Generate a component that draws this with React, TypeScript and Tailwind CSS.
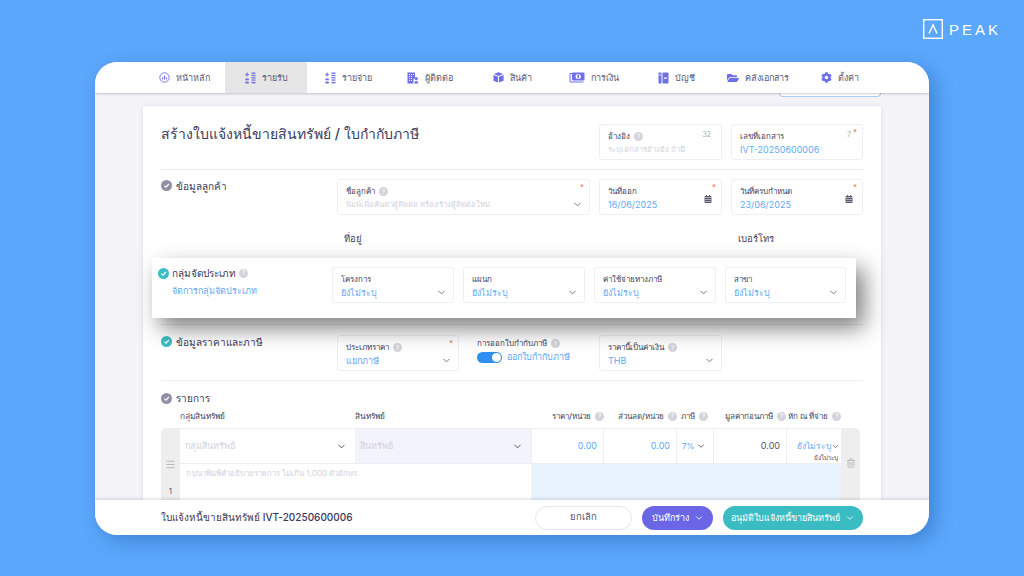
import React from "react";
import { ChevronDown, Menu, Trash2 } from "lucide-react";
import { FaFolderOpen, FaCog, FaCalendarAlt } from "react-icons/fa";

const C = "text-[#6f6fe8]";
const Bars = () => (
  <svg width="11" height="12" viewBox="0 0 11 12" className={C} fill="currentColor">
    <rect x="0.3" y="2" width="3.6" height="1.1" />
    <rect x="1.55" y="0.5" width="1.1" height="4" />
    <rect x="0.3" y="6.4" width="3.6" height="1.8" rx=".6" />
    <rect x="0.3" y="9.6" width="3.6" height="1.8" rx=".6" />
    <rect x="6.5" y="0.5" width="4" height="1.3" />
    <rect x="6.5" y="2.8" width="4" height="1.3" />
    <rect x="6.5" y="5.1" width="4" height="1.3" />
    <rect x="6.5" y="7.4" width="4" height="1.3" />
    <rect x="6.5" y="9.9" width="4" height="1.5" />
  </svg>
);
const HomeIcon = () => (
  <svg width="11" height="11" viewBox="0 0 11 11" className={C} fill="none" stroke="currentColor">
    <circle cx="5.5" cy="5.5" r="4.7" strokeWidth=".9" />
    <path d="M3.7 7.5V5.2M5.5 7.5V3.5M7.3 7.5V5.2" strokeWidth="1" />
  </svg>
);
const Contact = () => (
  <svg width="12" height="12" viewBox="0 0 12 12" className={C} fill="currentColor">
    <path d="M0.5 0.5h7.5v5.2a3 3 0 0 0-1.6 2.7v3.1H0.5z" />
    <path d="M2 2h1v1H2zM4 2h1v1H4zM6 2h1v1H6zM2 4h1v1H2zM4 4h1v1H4zM2 6h1v1H2zM4 6h1v1H4zM2 8h1v1H2zM4 8h1v1H4z" fill="white" />
    <circle cx="9.2" cy="6.6" r="1.6" />
    <path d="M7.2 11.5c0-1.6.9-2.5 2-2.5s2 .9 2 2.5z" />
  </svg>
);
const Cube = () => (
  <svg width="11" height="11" viewBox="0 0 11 11" className={C} fill="currentColor">
    <path d="M5.5 0.3 10.2 2.1 5.5 3.9 0.8 2.1z" />
    <path d="M0.4 3 5 4.8v5.8L.4 8.7zM10.6 3 6 4.8v5.8l4.6-1.9z" />
  </svg>
);
const Money = () => (
  <svg width="16" height="12" viewBox="0 0 16 12" className={C} fill="none" stroke="currentColor">
    <path d="M3 1.5h-2v8.5h13.5" strokeWidth="1" />
    <rect x="3" y="0.5" width="12.5" height="8" rx="1" fill="currentColor" stroke="none" />
    <circle cx="9.2" cy="4.5" r="2.6" fill="white" stroke="none" />
    <rect x="8.4" y="2.6" width="1.6" height="3.8" fill="currentColor" stroke="none" />
  </svg>
);
const Book = () => (
  <svg width="11" height="12" viewBox="0 0 11 12" className={C} fill="currentColor">
    <rect x="0.5" y="0.5" width="3" height="11" rx=".6" />
    <rect x="4.5" y="0.5" width="6" height="11" rx=".8" />
    <rect x="6" y="5.5" width="3" height="1.2" fill="white" />
    <rect x="1.2" y="2.5" width="1.6" height="1" fill="white" />
  </svg>
);
const nav: [string, React.ReactNode][] = [
  ["หน้าหลัก", <HomeIcon />],
  ["รายรับ", <Bars />],
  ["รายจ่าย", <Bars />],
  ["ผู้ติดต่อ", <Contact />],
  ["สินค้า", <Cube />],
  ["การเงิน", <Money />],
  ["บัญชี", <Book />],
  ["คลังเอกสาร", <FaFolderOpen size={12} className={C} />],
  ["ตั้งค่า", <FaCog size={11} className={C} />],
];

const Q = () => (
  <span className="inline-flex h-[9px] w-[9px] shrink-0 items-center justify-center rounded-full bg-[#d3d3dc] text-[6px] leading-none text-white">?</span>
);
const Check = ({ teal }: { teal?: boolean }) => (
  <span className={`inline-flex h-[11px] w-[11px] shrink-0 items-center justify-center rounded-full ${teal ? "bg-[#3cbcc4]" : "bg-[#9191a6]"}`}>
    <svg width="7" height="7" viewBox="0 0 7 7" fill="none" stroke="white" strokeWidth="1.2"><path d="M1.3 3.6 3 5.1 5.8 2" /></svg>
  </span>
);
const Req = () => <span className="absolute right-[5px] top-[1px] text-[8px] leading-[12px] text-[#f26d5b]">*</span>;

function Field({ w, label, value, q, req, placeholder, chevron, cal, count }: {
  w: string; label: string; value: string; q?: boolean; req?: boolean; placeholder?: boolean; chevron?: boolean; cal?: boolean; count?: string;
}) {
  return (
    <div className={`relative h-[36px] shrink-0 rounded-[3px] border border-[#eeeef5] bg-white pl-[8px] pr-[6px] pt-[5px] ${w}`}>
      <div className="flex h-[13px] items-center gap-[4px] whitespace-nowrap text-[8px] leading-[13px] text-[#3f3f5c]">{label}{q && <Q />}</div>
      <div className={`truncate leading-[13px] ${placeholder ? "text-[7.7px] text-[#d2d2dc]" : "text-[9px] text-[#62a9f8]"}`}>{value}</div>
      {req && <Req />}
      {count && <span className={`absolute top-[5px] text-[7px] leading-[10px] text-[#a9a9b8] ${req ? "right-[11px]" : "right-[10px]"}`}>{count}</span>}
      {chevron && <ChevronDown size={11} strokeWidth={1.8} className="absolute right-[6px] top-[19px] text-[#5a5a72]" />}
      {cal && <FaCalendarAlt size={8} className="absolute right-[9px] top-[15px] text-[#5a5a72]" />}
    </div>
  );
}

const Th = ({ w, label, q, right }: { w: string; label: string; q?: boolean; right?: boolean }) => (
  <div className={`flex shrink-0 items-center gap-[4px] whitespace-nowrap font-medium leading-[12px] text-[#3f3f5c] ${w} ${right ? "justify-end text-[8px]" : "text-[8.3px]"}`}>{label}{q && <Q />}</div>
);

export default function App() {
  return (
    <div className="relative h-[576px] w-[1024px] overflow-hidden bg-[#5aa7fb] pl-[95px] pt-[62px] font-['Inter','Noto_Sans',sans-serif]">
      <div className="absolute left-[923px] top-[19px] flex items-center gap-[6px] text-white">
        <svg width="20" height="20" viewBox="0 0 20 20" fill="none" stroke="white"><rect x=".7" y=".7" width="18.6" height="18.6" strokeWidth="1.4" /><path d="M6 14.5 10 6 14 14.5" strokeWidth="1.5" /></svg>
        <span className="text-[15px] font-medium leading-none tracking-[3px] font-['Liberation_Sans',sans-serif]">PEAK</span>
      </div>

      <div className="relative flex h-[473px] w-[834px] flex-col overflow-hidden rounded-[22px] bg-[#f3f3f8] shadow-[6px_6px_18px_rgba(20,70,140,0.35)]">
        <nav className="relative z-10 flex h-[31px] shrink-0 bg-white pl-[48px] shadow-[0_1px_2px_rgba(0,0,0,0.2)]">
          {nav.map(([t, ic], i) => (
            <div key={t} className={`flex w-[82px] items-center justify-center gap-[6px] text-[9px] text-[#5a5a78] ${i === 1 ? "bg-[#e6e6e6]" : ""}`}>
              {ic}<span>{t}</span>
            </div>
          ))}
        </nav>

        <main className="relative min-h-0 flex-1 overflow-hidden pl-[48px] pt-[13px]">
          <div className="absolute left-[684px] top-0 h-[4px] w-[102px] rounded-b-[6px] border border-t-0 border-[#a8cdf8] bg-white" />
          <div className="w-[738px] bg-white px-[18px] pt-[18px] pb-[40px] shadow-[0_0_4px_rgba(40,40,80,0.12)]">
            <div className="flex h-[36px] gap-[9px]">
              <h1 className="w-[429px] shrink-0 pt-[1px] text-[14px] font-medium leading-[18px] text-[#3a3a5e]">สร้างใบแจ้งหนี้ขายสินทรัพย์ / ใบกำกับภาษี</h1>
              <Field w="w-[123px]" label="อ้างอิง" value="ระบุเอกสารอ้างอิง ถ้ามี" q placeholder count="32" />
              <Field w="w-[132px]" label="เลขที่เอกสาร" value="IVT-20250600006" req count="7" />
            </div>
            <div className="mt-[9px] border-t border-[#ebebf5]" />

            <div className="mt-[9px] flex">
              <div className="flex w-[176px] shrink-0 items-start gap-[4px] pt-[1px] text-[10px] font-medium leading-[12px] text-[#3a3a5e]"><Check /> ข้อมูลลูกค้า</div>
              <div className="flex gap-[9px]">
                <Field w="w-[253px]" label="ชื่อลูกค้า" value="พิมพ์เพื่อค้นหาผู้ติดต่อ หรือสร้างผู้ติดต่อใหม่" q req placeholder chevron />
                <Field w="w-[123px]" label="วันที่ออก" value="16/06/2025" req cal />
                <Field w="w-[132px]" label="วันที่ครบกำหนด" value="23/06/2025" req cal />
              </div>
            </div>
            <div className="mt-[17px] flex h-[14px] text-[9.5px] font-medium leading-[14px] text-[#3f3f5c]">
              <span className="ml-[183px] w-[394px]">ที่อยู่</span><span>เบอร์โทร</span>
            </div>

            <div className="mt-[78px] border-t border-[#ebebf5]" />

            <div className="mt-[10px] flex">
              <div className="flex w-[176px] shrink-0 items-start gap-[4px] pt-[1px] text-[10px] font-medium leading-[12px] text-[#3a3a5e]"><Check teal /> ข้อมูลราคาและภาษี</div>
              <Field w="w-[122px]" label="ประเภทราคา" value="แยกภาษี" q req chevron />
              <div className="ml-[18px] w-[122px] shrink-0 pt-[2px]">
                <div className="flex h-[13px] items-center gap-[4px] whitespace-nowrap text-[8px] leading-[13px] text-[#3f3f5c]">การออกใบกำกับภาษี <Q /></div>
                <div className="mt-[1px] flex items-center gap-[5px] whitespace-nowrap text-[9px] leading-[12px] text-[#62a9f8]">
                  <span className="flex h-[11px] w-[25px] shrink-0 justify-end rounded-full bg-[#2f8ef0] p-[1px]"><span className="h-[9px] w-[9px] rounded-full bg-white" /></span>
                  ออกใบกำกับภาษี
                </div>
              </div>
              <Field w="w-[123px]" label="ราคานี้เป็นค่าเงิน" value="THB" q chevron />
            </div>
            <div className="mt-[9px] border-t border-[#ebebf5]" />

            <div className="mt-[11px] flex items-center gap-[4px] text-[10px] font-medium leading-[12px] text-[#3a3a5e]"><Check /> รายการ</div>
            <div className="ml-[19px] mt-[6px] flex h-[12px]">
              <Th w="w-[175px]" label="กลุ่มสินทรัพย์" />
              <Th w="w-[176px]" label="สินทรัพย์" />
              <Th w="w-[73px]" label="ราคา/หน่วย" q right />
              <Th w="w-[73px]" label="ส่วนลด/หน่วย" q right />
              <Th w="w-[31px]" label="ภาษี" q right />
              <Th w="w-[78px]" label="มูลค่าก่อนภาษี" q right />
              <Th w="w-[55px]" label="หัก ณ ที่จ่าย" q right />
            </div>

            <div className="mt-[6px] flex h-[90px] w-[699px] overflow-hidden rounded-[5px] border-t border-[#ededf3] bg-[#eeeeee]">
              <div className="flex w-[19px] shrink-0 flex-col items-center pt-[30px]">
                <Menu size={11} className="text-[#b5b5b5]" />
                <span className="mt-[16px] text-[8px] leading-[10px] text-[#55556e]">1</span>
              </div>
              <div className="w-[661px] shrink-0 bg-white">
                <div className="flex h-[35px] border-b border-[#ededf3] text-[9px] text-[#62a9f8]">
                  <div className="flex w-[175px] items-center justify-between pl-[5px] pr-[8px] text-[#d2d2dc]">กลุ่มสินทรัพย์ <ChevronDown size={11} className="text-[#4a4a62]" /></div>
                  <div className="flex w-[176px] items-center justify-between bg-[#f3f4fb] pl-[5px] pr-[8px] text-[#d2d2dc]">สินทรัพย์ <ChevronDown size={11} className="text-[#4a4a62]" /></div>
                  <div className="flex w-[73px] items-center justify-end border-x border-[#ededf3] pr-[6px]">0.00</div>
                  <div className="flex w-[73px] items-center justify-end border-r border-[#ededf3] pr-[6px]">0.00</div>
                  <div className="flex w-[37px] items-center justify-between border-r border-[#ededf3] pl-[5px] pr-[7px] text-[8px]">7% <ChevronDown size={10} className="text-[#4a4a62]" /></div>
                  <div className="flex w-[73px] items-center justify-end border-r border-[#ededf3] pr-[6px] text-[#55556e]">0.00</div>
                  <div className="w-[54px] pt-[12px] text-right">
                    <div className="flex items-center justify-end whitespace-nowrap pr-[1px] text-[8.5px] leading-[11px]">ยังไม่ระบุ<ChevronDown size={9} className="text-[#4a4a62]" /></div>
                    <div className="mt-[2px] pr-[3px] text-[6.5px] leading-[8px] text-[#55556e]">ยังไม่ระบุ</div>
                  </div>
                </div>
                <div className="flex h-[55px]">
                  <div className="w-[351px] pl-[6px] pt-[3px] text-[8px] leading-[12px] text-[#d2d2dc]">กรุณาพิมพ์คำอธิบายรายการ ไม่เกิน 1,000 ตัวอักษร</div>
                  <div className="w-[310px] bg-[#e8f3fe]" />
                </div>
              </div>
              <div className="flex w-[19px] shrink-0 justify-center pt-[29px]"><Trash2 size={10} className="text-[#b5b5b5]" /></div>
            </div>
          </div>

          <div className="absolute left-[57px] top-[165px] z-10 flex h-[60px] w-[704px] bg-white pl-[6px] pt-[9px] shadow-[8px_10px_22px_rgba(0,0,0,0.5)]">
            <div className="w-[174px] shrink-0">
              <div className="flex items-center gap-[3px] text-[10px] font-medium leading-[12px] text-[#3a3a5e]"><Check teal /> <span>กลุ่มจัดประเภท</span> <Q /></div>
              <div className="ml-[14px] mt-[6px] text-[9px] leading-[12px] text-[#62a9f8]">จัดการกลุ่มจัดประเภท</div>
            </div>
            <div className="flex gap-[9px]">
              <Field w="w-[122px]" label="โครงการ" value="ยังไม่ระบุ" chevron />
              <Field w="w-[122px]" label="แผนก" value="ยังไม่ระบุ" chevron />
              <Field w="w-[122px]" label="ค่าใช้จ่ายทางภาษี" value="ยังไม่ระบุ" chevron />
              <Field w="w-[121px]" label="สาขา" value="ยังไม่ระบุ" chevron />
            </div>
          </div>
        </main>

        <footer className="relative z-10 flex h-[35px] shrink-0 items-center bg-white pl-[66px] shadow-[0_-1px_3px_rgba(0,0,0,0.15)]">
          <span className="w-[374px] text-[10px] font-medium text-[#3a3a5e]">ใบแจ้งหนี้ขายสินทรัพย์ IVT-20250600006</span>
          <button className="flex h-[24px] w-[97px] items-center justify-center rounded-full border border-[#e6e6ee] bg-white text-[9.5px] text-[#55556e]">ยกเลิก</button>
          <button className="ml-[10px] flex h-[24px] w-[71px] items-center justify-center gap-[5px] whitespace-nowrap rounded-full bg-[#6a66e6] text-[9px] text-white">บันทึกร่าง <ChevronDown size={10} /></button>
          <button className="ml-[10px] flex h-[24px] w-[140px] items-center justify-center gap-[5px] whitespace-nowrap rounded-full bg-[#3bbcc2] text-[9px] text-white">อนุมัติใบแจ้งหนี้ขายสินทรัพย์ <ChevronDown size={10} /></button>
        </footer>
      </div>
    </div>
  );
}
